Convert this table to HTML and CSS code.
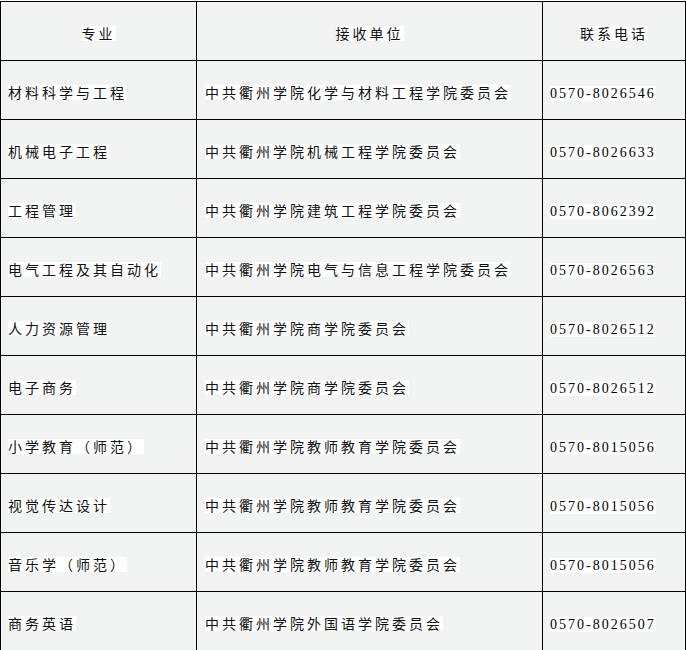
FILE: index.html
```html
<!DOCTYPE html>
<html lang="zh">
<head>
<meta charset="utf-8">
<title>接收单位</title>
<link rel="stylesheet" href="styles.css">
</head>
<body>
<table class="units">
  <colgroup>
    <col class="c-major">
    <col class="c-unit">
    <col class="c-tel">
  </colgroup>
  <thead>
    <tr>
      <th><span class="t">专业</span></th>
      <th><span class="t">接收单位</span></th>
      <th><span class="t">联系电话</span></th>
    </tr>
  </thead>
  <tbody>
    <tr><td class="major"><span class="t">材料科学与工程</span></td><td class="unit"><span class="t">中共衢州学院化学与材料工程学院委员会</span></td><td class="tel"><span class="n">0570-8026546</span></td></tr>
    <tr><td class="major"><span class="t">机械电子工程</span></td><td class="unit"><span class="t">中共衢州学院机械工程学院委员会</span></td><td class="tel"><span class="n">0570-8026633</span></td></tr>
    <tr><td class="major"><span class="t">工程管理</span></td><td class="unit"><span class="t">中共衢州学院建筑工程学院委员会</span></td><td class="tel"><span class="n">0570-8062392</span></td></tr>
    <tr><td class="major"><span class="t">电气工程及其自动化</span></td><td class="unit"><span class="t">中共衢州学院电气与信息工程学院委员会</span></td><td class="tel"><span class="n">0570-8026563</span></td></tr>
    <tr><td class="major"><span class="t">人力资源管理</span></td><td class="unit"><span class="t">中共衢州学院商学院委员会</span></td><td class="tel"><span class="n">0570-8026512</span></td></tr>
    <tr><td class="major"><span class="t">电子商务</span></td><td class="unit"><span class="t">中共衢州学院商学院委员会</span></td><td class="tel"><span class="n">0570-8026512</span></td></tr>
    <tr><td class="major"><span class="t">小学教育（师范）</span></td><td class="unit"><span class="t">中共衢州学院教师教育学院委员会</span></td><td class="tel"><span class="n">0570-8015056</span></td></tr>
    <tr><td class="major"><span class="t">视觉传达设计</span></td><td class="unit"><span class="t">中共衢州学院教师教育学院委员会</span></td><td class="tel"><span class="n">0570-8015056</span></td></tr>
    <tr><td class="major"><span class="t">音乐学（师范）</span></td><td class="unit"><span class="t">中共衢州学院教师教育学院委员会</span></td><td class="tel"><span class="n">0570-8015056</span></td></tr>
    <tr><td class="major"><span class="t">商务英语</span></td><td class="unit"><span class="t">中共衢州学院外国语学院委员会</span></td><td class="tel"><span class="n">0570-8026507</span></td></tr>
  </tbody>
</table>
</body>
</html>
```

FILE: styles.css
```css
html, body {
  margin: 0;
  padding: 0;
  background: #ffffff;
}

body {
  padding-top: 1px;
  overflow: hidden;
}

.units {
  width: 686px;
  margin: 0;
  table-layout: fixed;
  border-collapse: separate;
  border-spacing: 1px;
  background: #000000;
}

.c-major { width: 195px; }
.c-unit { width: 345px; }
.c-tel { width: 142px; }

.units th,
.units td {
  height: 58px;
  padding: 6px 0 0 0;
  box-sizing: border-box;
  background: #f2f4f4;
  vertical-align: middle;
  color: #111111;
  font-weight: normal;
}

.units th {
  text-align: center;
}

.units td.major { padding-left: 7px; }
.units td.unit { padding-left: 8px; }
.units td.tel { padding-left: 7px; }

.t {
  display: inline-block;
  background: #ffffff;
  font-family: "Noto Sans CJK SC", "Noto Sans CJK JP", sans-serif;
  font-size: 14px;
  letter-spacing: 3px;
  line-height: 15px;
  height: 15px;
  white-space: nowrap;
}

.n {
  display: inline-block;
  background: #ffffff;
  color: #000000;
  font-family: "Liberation Serif", "DejaVu Serif", serif;
  font-size: 14px;
  letter-spacing: 2px;
  line-height: 15px;
  height: 15px;
  white-space: nowrap;
}
```
